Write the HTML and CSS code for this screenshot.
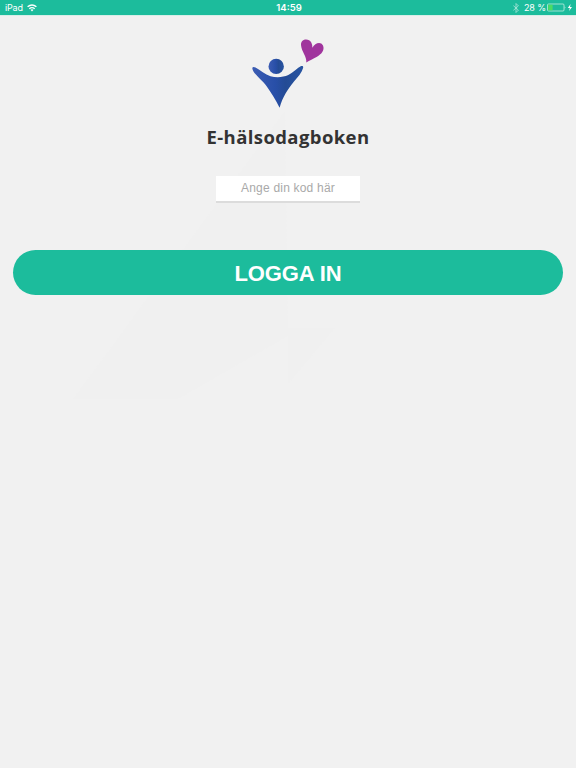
FILE: index.html
```html
<!DOCTYPE html>
<html lang="sv">
<head>
<meta charset="utf-8">
<title>E-hälsodagboken</title>
<link rel="stylesheet" href="styles.css">
</head>
<body>
<header class="status">
  <div class="status-left">
    <span class="device">iPad</span>
    <svg class="wifi" width="10" height="8" viewBox="0 0 10 8" fill="none" stroke="#fff" stroke-width="1.4">
      <path d="M.6 2.8Q5-1 9.4 2.8M2.3 4.7Q5 2.5 7.7 4.7"/>
      <path d="M3.5 5.8Q5 4.7 6.5 5.8L5 7.4Z" fill="#fff" stroke="none"/>
    </svg>
  </div>
  <span class="clock">14:59</span>
  <div class="status-right">
    <svg class="bluetooth" width="6" height="10" viewBox="0 0 6 10" fill="none" stroke="#fff" stroke-width=".8">
      <path d="M.4 2.7L5.4 7.1 3 9.5V.5L5.4 2.9.4 7.3"/>
    </svg>
    <span class="percent">28 %</span>
    <svg class="battery" width="26" height="9" viewBox="0 0 26 9">
      <rect x=".5" y="1" width="16.5" height="7" rx="1" fill="none" stroke="#d5f3e9" stroke-width=".7"/>
      <rect x="1.2" y="1.7" width="4.4" height="5.6" fill="#4cdc64"/>
      <path d="M17.8 3.2q1.1 1.3 0 2.6z" fill="#fff"/>
      <path d="M23.6.9L20.8 5h2l-.7 3.1L25 4h-2z" fill="#fff"/>
    </svg>
  </div>
</header>
<main class="login">
  <svg class="backdrop" width="576" height="400" viewBox="0 0 576 400" aria-hidden="true">
    <path d="M285 95L73 383H178L288 320V368L335 312 288 312Z"/>
  </svg>
  <svg class="logo" width="96" height="85" viewBox="0 0 96 85">
    <defs>
      <linearGradient id="blue" x1="0" x2="1">
        <stop offset="0" stop-color="#3c5cb3"/>
        <stop offset=".45" stop-color="#284fa8"/>
        <stop offset=".65" stop-color="#244b95"/>
        <stop offset="1" stop-color="#2855a2"/>
      </linearGradient>
    </defs>
    <ellipse cx="36.2" cy="36.4" rx="7.7" ry="7.7" fill="url(#blue)"/>
    <path d="M12.3 38C12.6 36.7 13.9 36.6 15.5 37.5C20.5 40.3 25 44.3 30.5 46.2C36 47.7 43 47.5 48.3 45C53.5 42.5 57.3 38 61.2 36.1C62.7 35.6 63.5 36.4 63.1 37.9C62 42.3 58 46.8 54 51.4C47.5 59.5 42.8 66.5 39.6 77.7C35.5 69.5 31 62.5 26.8 56.4C21 48.7 12.3 43 12.3 38Z" fill="url(#blue)"/>
    <path d="M66.3 32.5C67 26.5 61.4 21.5 61 15C60.8 8.5 69 8 71.4 12.8Q72.6 15.3 72.4 17.8C75 12.6 81 11.5 83 15.6C85 20.6 81.2 24.3 77 26.8C73 29.2 69.6 30.2 66.3 32.5Z" fill="#a0349d"/>
  </svg>
  <h1 class="title">E-hälsodagboken</h1>
  <input class="code" type="text" placeholder="Ange din kod här" aria-label="Kod">
  <button class="submit" type="button">LOGGA IN</button>
</main>
</body>
</html>
```
FILE: styles.css
```css
* {
  box-sizing: border-box;
}

body {
  margin: 0;
  min-height: 768px;
  background: #f1f1f1;
  font-family: "Liberation Sans", Arial, sans-serif;
}

.status {
  display: grid;
  grid-template-columns: 1fr auto 1fr;
  align-items: center;
  height: 16px;
  padding: 0 3px 0 5px;
  border-bottom: 1px solid #d7eee8;
  background: #1cbc9c;
  background-clip: padding-box;
  color: #fff;
  font-family: Inter, "Liberation Sans", sans-serif;
  font-size: 9px;
  line-height: 15px;
}

.status-left,
.status-right {
  display: flex;
  align-items: center;
}

.status-left {
  gap: 4px;
}

.device {
  letter-spacing: -0.2px;
}

.status-right {
  justify-content: flex-end;
}

.clock {
  font-size: 9.5px;
  font-weight: 600;
}

.bluetooth {
  margin-right: 5px;
  opacity: 0.65;
}

.percent {
  margin-right: 1px;
  letter-spacing: -0.1px;
}

.login {
  position: relative;
  display: flex;
  flex-direction: column;
  align-items: center;
  padding: 14px 13px 0;
}

.backdrop {
  position: absolute;
  top: 0;
  left: 0;
  z-index: -1;
  fill: #f0f0f0;
}

.logo {
  display: block;
}

.title {
  margin: 8px 0 0;
  color: #333;
  font-family: "Open Sans", sans-serif;
  font-size: 18.5px;
  font-weight: 800;
  font-weight: 700;
  line-height: 28px;
  letter-spacing: 0.4px;
}

.code {
  width: 144px;
  height: 27px;
  margin-top: 25px;
  padding: 0 0 1px;
  border: 0;
  border-bottom: 2px solid #dcdcdc;
  background: #fff;
  color: #333;
  font: 12px "Liberation Sans", Arial, sans-serif;
  letter-spacing: 0.2px;
  text-align: center;
}

.code::placeholder {
  color: #a9a9a9;
}

.submit {
  width: 100%;
  height: 45px;
  margin-top: 47px;
  padding: 2px 0 0;
  border: 0;
  border-radius: 23px;
  background: #1cbc9c;
  color: #fff;
  font: bold 22px "Liberation Sans", Arial, sans-serif;
  letter-spacing: -0.1px;
}
```
